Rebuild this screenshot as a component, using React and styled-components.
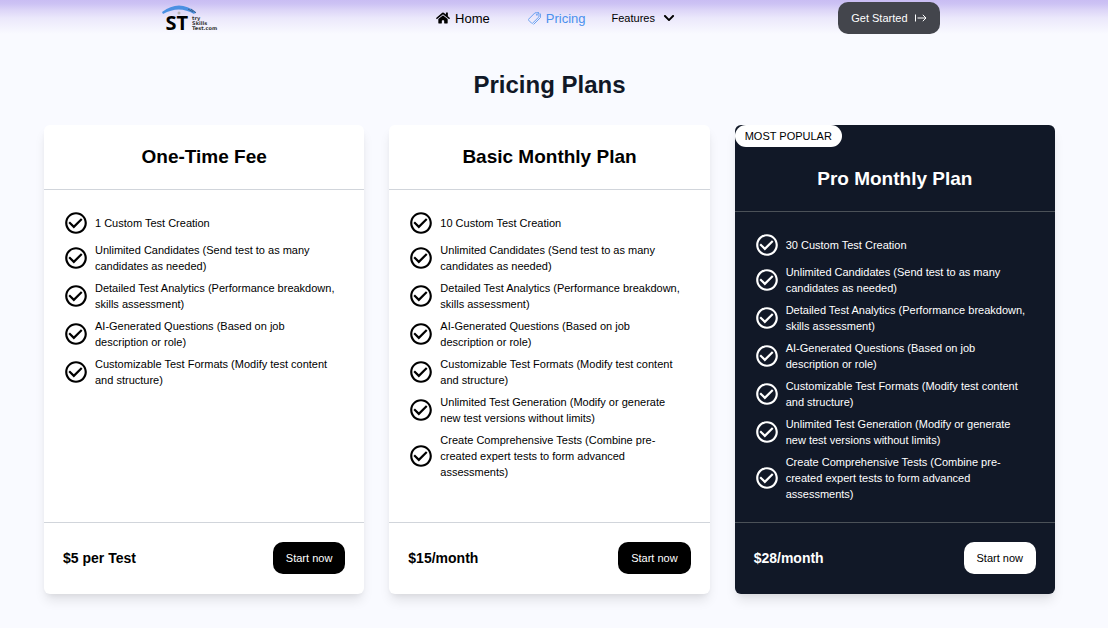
import React from 'react'
import styled, { createGlobalStyle } from 'styled-components';
import { FaHome, FaChevronDown } from 'react-icons/fa';
import { IoPricetagsOutline } from 'react-icons/io5';
import { MdCheckCircleOutline } from 'react-icons/md';

const baseFeatures = [
  'Unlimited Candidates (Send test to as many candidates as needed)',
  'Detailed Test Analytics (Performance breakdown, skills assessment)',
  'AI-Generated Questions (Based on job description or role)',
  'Customizable Test Formats (Modify test content and structure)',
]

const extraFeatures = [
  'Unlimited Test Generation (Modify or generate new test versions without limits)',
  'Create Comprehensive Tests (Combine pre-created expert tests to form advanced assessments)',
]

const plans = [
  {
    name: 'One-Time Fee',
    price: '$5 per Test',
    features: ['1 Custom Test Creation', ...baseFeatures],
  },
  {
    name: 'Basic Monthly Plan',
    price: '$15/month',
    features: ['10 Custom Test Creation', ...baseFeatures, ...extraFeatures],
  },
  {
    name: 'Pro Monthly Plan',
    price: '$28/month',
    popular: true,
    features: ['30 Custom Test Creation', ...baseFeatures, ...extraFeatures],
  },
]

function Logo() {
  return (
    <LogoLink href="#" aria-label="Try Skills Test">
      <LogoArc viewBox="0 0 36 10" aria-hidden="true">
        <path d="M0 7 Q17 -6 34 7 L32 9 Q17 0 1 9 Z" fill="#4a90e2" />
        <path d="M26 4 L31 7 M29 4 L34 8" stroke="#3b5f8a" strokeWidth="1" />
        <circle cx="17" cy="8" r="1.5" fill="#b9b4b4" />
      </LogoArc>
      <LogoRow>
        <LogoLetters>ST</LogoLetters>
        <LogoWords>
          <span>try</span>
          <span>Skills</span>
          <span>Test.com</span>
        </LogoWords>
      </LogoRow>
    </LogoLink>
  )
}

// arrow with a short bar at its tail
function BarArrow() {
  return (
    <svg width="12" height="10" viewBox="0 0 12 10" fill="none" stroke="currentColor" strokeWidth="1" aria-hidden="true">
      <path d="M0.5 1.5 V8.5 M2.5 5 H11 M7.8 1.8 L11 5 L7.8 8.2" />
    </svg>
  )
}

function PlanCard({ plan }) {
  return (
    <Card $dark={plan.popular}>
      {plan.popular && <Badge>MOST POPULAR</Badge>}
      <CardTitle>{plan.name}</CardTitle>
      <FeatureList $dark={plan.popular}>
        {plan.features.map((feature) => (
          <Feature key={feature}>
            <MdCheckCircleOutline size={26} />
            <span>{feature}</span>
          </Feature>
        ))}
      </FeatureList>
      <CardFooter>
        <Price>{plan.price}</Price>
        <StartButton $light={plan.popular}>Start now</StartButton>
      </CardFooter>
    </Card>
  )
}

function App() {
  return (
    <Page>
      <GlobalStyle />
      <Header>
        <Side>
          <Logo />
        </Side>
        <Nav>
          <NavLink href="#">
            <FaHome size={14} />
            Home
          </NavLink>
          <NavLink href="#" $active>
            <IoPricetagsOutline size={13} />
            Pricing
          </NavLink>
          <FeaturesButton>
            Features
            <FaChevronDown size={12} />
          </FeaturesButton>
        </Nav>
        <Side $end>
          <GetStarted>
            Get Started
            <BarArrow />
          </GetStarted>
        </Side>
      </Header>
      <Main>
        <Heading>Pricing Plans</Heading>
        <Plans>
          {plans.map((plan) => (
            <PlanCard key={plan.name} plan={plan} />
          ))}
        </Plans>
      </Main>
    </Page>
  )
}

export default App

const GlobalStyle = createGlobalStyle`
*{
  box-sizing:border-box;
}
body{
  margin:0;
  background:#f9faff;
  color:#000;
  font-family:"Liberation Sans", Arial, sans-serif;
}
button{
  font-family:inherit;
  cursor:pointer;
}
a{
  color:inherit;
  text-decoration:none;
}
`

const Page = styled.div`
min-height:100vh;
padding-right:9px;
background:linear-gradient(180deg, #c9bdf3 0, #cdc3f4 4px, #dcd5f7 10px, #ebe8fb 18px, #f9faff 34px);
`

const Header = styled.header`
display:flex;
align-items:center;
max-width:780px;
height:36px;
margin:0 auto;
`

const Side = styled.div`
display:flex;
flex:1;
justify-content:${props => props.$end ? 'flex-end' : 'flex-start'};
`

const LogoLink = styled.a`
display:flex;
flex-direction:column;
padding-left:2px;
`

const LogoArc = styled.svg`
display:block;
width:36px;
height:10px;
fill:none;
`

const LogoRow = styled.div`
display:flex;
align-items:center;
gap:4px;
padding-left:4px;
`

const LogoLetters = styled.span`
font-family:"Open Sans", sans-serif;
font-size:20px;
font-weight:700;
line-height:16px;
`

const LogoWords = styled.span`
display:flex;
flex-direction:column;
font-family:"DejaVu Sans", sans-serif;
font-size:5px;
font-weight:700;
line-height:5px;
color:#333;
`

const Nav = styled.nav`
display:flex;
align-items:center;
padding-left:12px;
`

const NavLink = styled.a`
display:flex;
align-items:center;
gap:5px;
margin-right:${props => props.$active ? '26px' : '38px'};
font-size:13px;
color:${props => props.$active ? '#4a90ee' : '#000'};
`

const FeaturesButton = styled.button`
display:flex;
align-items:center;
gap:8px;
padding:0;
border:0;
background:none;
font-size:11px;
color:#000;
`

const GetStarted = styled.button`
display:flex;
align-items:center;
gap:7px;
height:32px;
padding:0 13px;
border:0;
border-radius:10px;
background:#43454c;
color:#fff;
font-size:11px;
`

const Main = styled.main`
max-width:1011px;
margin:0 auto;
padding:32px 0;
`

const Heading = styled.h1`
margin:0 0 24px;
font-size:24px;
line-height:33px;
text-align:center;
color:#111827;
`

const Plans = styled.div`
display:grid;
grid-template-columns:repeat(3, 1fr);
gap:25px;
`

const Card = styled.section`
display:flex;
flex-direction:column;
border-radius:6px;
background:${props => props.$dark ? '#111827' : '#fff'};
color:${props => props.$dark ? '#fff' : '#000'};
box-shadow:0 8px 12px -2px rgba(0,0,0,.1), 0 3px 5px -2px rgba(0,0,0,.06);
`

const Badge = styled.span`
align-self:flex-start;
padding:0 10px;
border-radius:11px;
background:#fff;
color:#000;
font-size:11px;
line-height:22px;
`

const CardTitle = styled.h2`
margin:0;
font-size:19px;
line-height:64px;
text-align:center;
`

const FeatureList = styled.ul`
display:flex;
flex:1;
flex-direction:column;
gap:6px;
margin:0;
padding:20px 24px 20px 19px;
border:solid ${props => props.$dark ? '#4b5158' : '#d1d5db'};
border-width:1px 0;
list-style:none;
`

const Feature = styled.li`
display:flex;
align-items:center;
gap:6px;
font-size:11px;
line-height:16px;
svg{
  flex-shrink:0;
}
`

const CardFooter = styled.div`
display:flex;
align-items:center;
justify-content:space-between;
height:71px;
padding:0 19px 2px;
`

const Price = styled.strong`
font-size:14px;
`

const StartButton = styled.button`
height:32px;
padding:0 13px;
border:0;
border-radius:10px;
background:${props => props.$light ? '#fff' : '#000'};
color:${props => props.$light ? '#000' : '#fff'};
font-size:11px;
`
